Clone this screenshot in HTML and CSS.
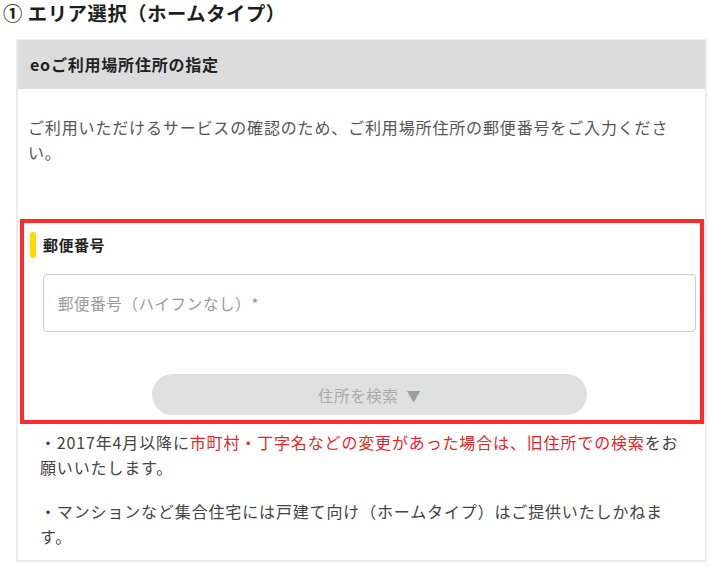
FILE: index.html
```html
<!DOCTYPE html>
<html lang="ja">
<head>
<meta charset="utf-8">
<link rel="stylesheet" href="styles.css">
</head>
<body>
<h1 class="title">① エリア選択（ホームタイプ）</h1>
<div class="panel">
  <div class="panel-head">eoご利用場所住所の指定</div>
  <p class="desc">ご利用いただけるサービスの確認のため、ご利用場所住所の郵便番号をご入力ください。</p>
  <div class="zip-section">
    <div class="label-row"><span class="bar"></span><span class="label">郵便番号</span></div>
    <div class="field">
      <div class="input"><span class="placeholder">郵便番号（ハイフンなし）*</span></div>
      <div class="btn-wrap"><div class="btn">住所を検索 <span class="tri">▼</span></div></div>
    </div>
  </div>
  <div class="notes">
    <p class="note">・2017年4月以降に<span class="red">市町村・丁字名などの変更があった場合は、旧住所での検索</span>をお願いいたします。</p>
    <p class="note">・マンションなど集合住宅には戸建て向け（ホームタイプ）はご提供いたしかねます。</p>
  </div>
</div>
</body>
</html>
```

FILE: styles.css
```css
html, body {
  margin: 0;
  padding: 0;
  background: #fff;
}
body {
  width: 710px;
  height: 566px;
  overflow: hidden;
  font-family: "Noto Sans CJK JP", "Noto Sans", sans-serif;
  color: #333;
}
.title {
  margin: 0;
  padding-left: 3px;
  height: 26px;
  line-height: 26px;
  font-size: 19.3px;
  letter-spacing: 0.6px;
  font-weight: 700;
  color: #1e1e1e;
}
.panel {
  margin: 13px 0 0 16px;
  width: 691px;
  height: 523px;
  box-sizing: border-box;
  border: 2px solid #ececec;
  border-top: 1px solid #f0f0f0;
}
.panel-head {
  height: 49px;
  line-height: 48px;
  background: #dcdcdc;
  padding-left: 12px;
  font-size: 16px;
  letter-spacing: 0.8px;
  font-weight: 700;
  color: #222;
}
.desc {
  margin: 26px 0 0 0;
  padding: 0 14px 0 10px;
  font-size: 16px;
  letter-spacing: 0.85px;
  line-height: 25px;
  color: #555;
}
.zip-section {
  margin: 54px 1px 0 2px;
  height: 205px;
  box-sizing: border-box;
  border: 4px solid #ff2a2a;
  padding: 9px 4px 0 6px;
}
.label-row {
  display: flex;
  align-items: center;
  gap: 7px;
  height: 26px;
}
.bar {
  width: 6px;
  height: 26px;
  border-radius: 3px;
  background: #ffdc00;
}
.label {
  font-size: 15px;
  letter-spacing: 0.5px;
  font-weight: 700;
  color: #222;
  line-height: 24px;
}
.field {
  margin: 16px 0 0 13px;
}
.input {
  height: 58px;
  box-sizing: border-box;
  border: 1px solid #cfcfcf;
  border-radius: 4px;
  display: flex;
  align-items: center;
  padding-left: 14px;
}
.placeholder {
  font-size: 15.5px;
  letter-spacing: 0.6px;
  color: #9a9a9a;
}
.btn-wrap {
  display: flex;
  justify-content: center;
  margin-top: 42px;
}
.btn {
  width: 435px;
  height: 41px;
  border-radius: 21px;
  background: #e0e0e0;
  display: flex;
  align-items: center;
  justify-content: center;
  font-size: 15.5px;
  letter-spacing: 0.6px;
  color: #ababab;
}
.tri {
  margin-left: 8px;
  color: #9d9d9d;
  font-size: 14px;
}
.notes {
  padding: 6px 15px 0 22px;
}
.note {
  margin: 0 0 19px 0;
  font-size: 16px;
  letter-spacing: 0.85px;
  line-height: 25px;
  color: #444;
}
.red {
  color: #e8262a;
}
```
